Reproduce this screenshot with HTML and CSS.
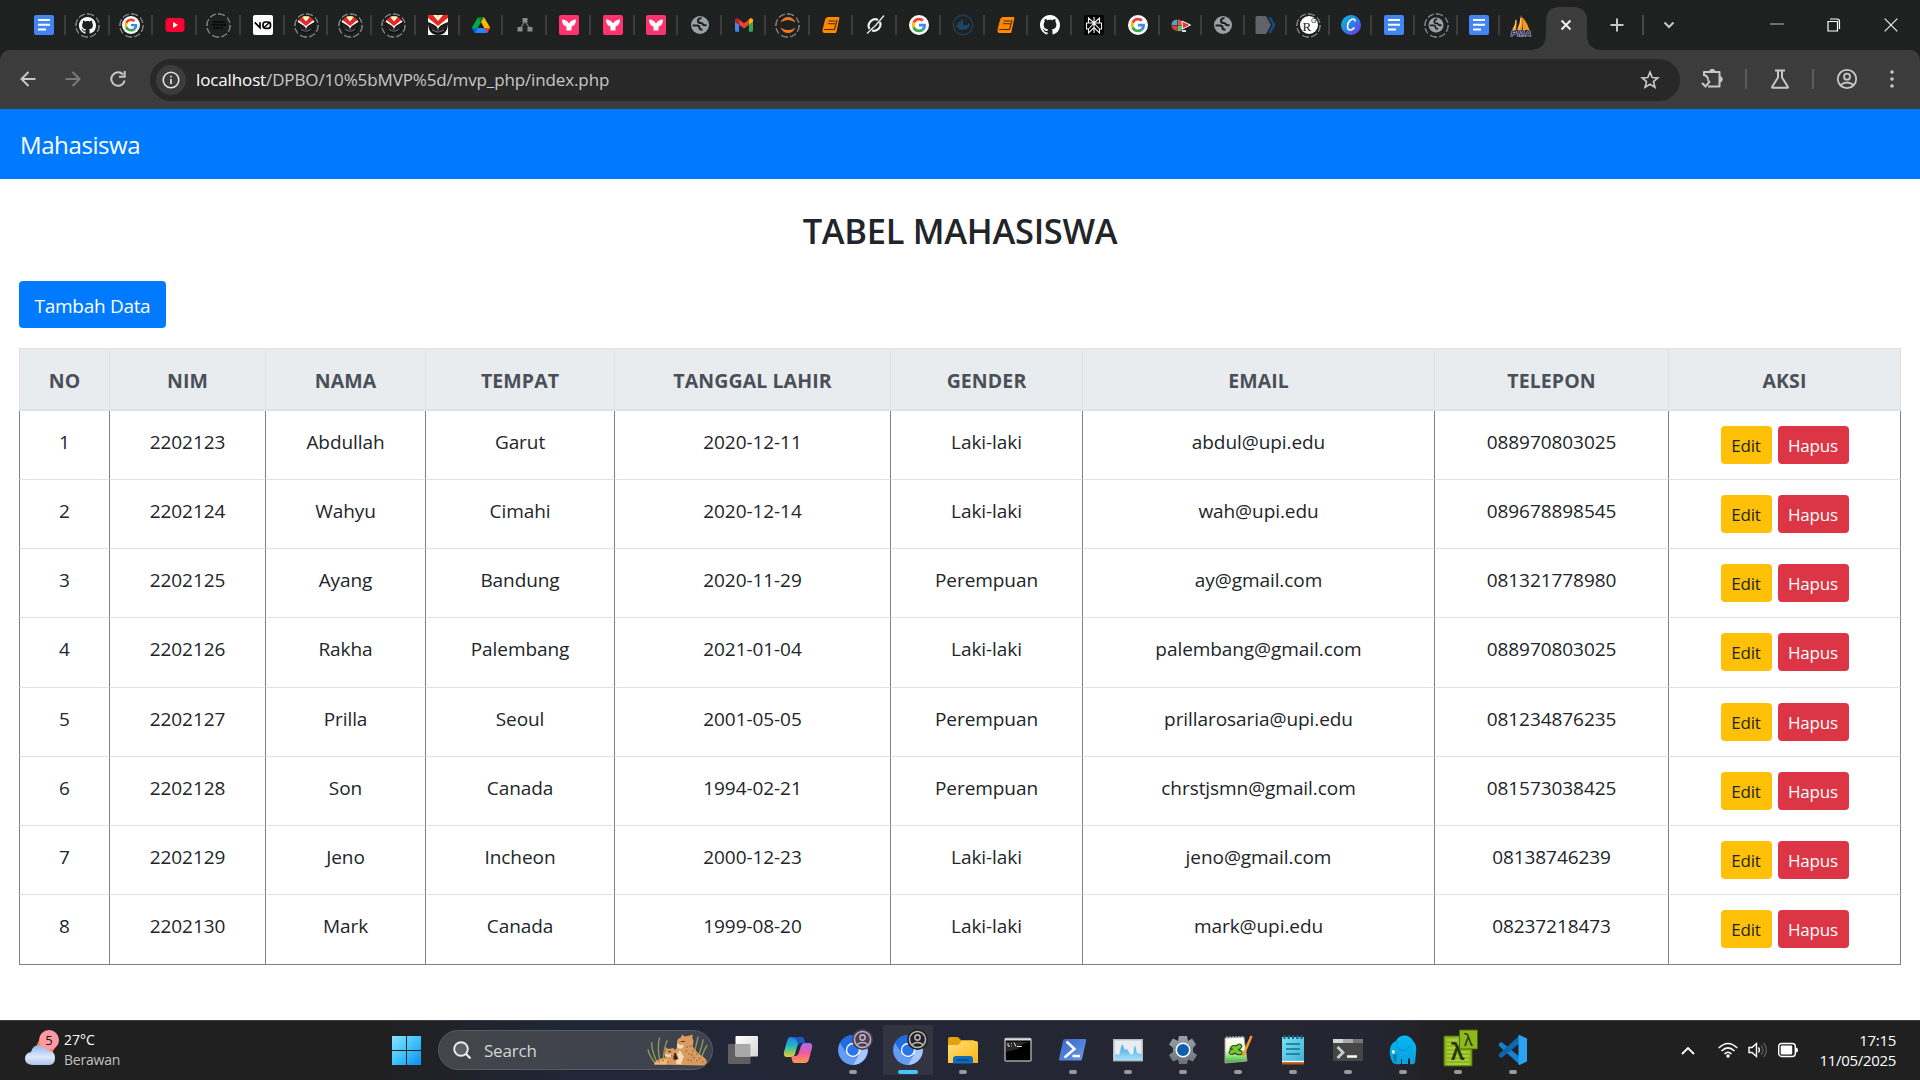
FILE: index.html
```html
<!DOCTYPE html>
<html lang="id">
<head>
<meta charset="utf-8">
<title>Mahasiswa</title>
<link rel="stylesheet" href="styles.css">
</head>
<body>
<svg class="defs" aria-hidden="true">
  <defs>
    <linearGradient id="gwin" x1="0" y1="0" x2="1" y2="1"><stop offset="0" stop-color="#8be2ff"/><stop offset=".5" stop-color="#3fc3fb"/><stop offset="1" stop-color="#0a8df5"/></linearGradient>
    <linearGradient id="gcanva" x1="0" y1="0" x2="1" y2="1"><stop offset="0" stop-color="#00c4cc"/><stop offset=".5" stop-color="#2b7fe8"/><stop offset="1" stop-color="#7d2ae8"/></linearGradient>
    <linearGradient id="gcloud" x1="0" y1="0" x2="0" y2="1"><stop offset="0" stop-color="#8fb4f0"/><stop offset=".6" stop-color="#dfe9fb"/><stop offset="1" stop-color="#a9c4f0"/></linearGradient>
    <linearGradient id="gfold" x1="0" y1="0" x2="1" y2="1"><stop offset="0" stop-color="#ffe07a"/><stop offset="1" stop-color="#f9b613"/></linearGradient>
    <linearGradient id="gcop1" x1="0" y1="0" x2="0" y2="1"><stop offset="0" stop-color="#1f7fe8"/><stop offset=".5" stop-color="#28c0b8"/><stop offset="1" stop-color="#f2c92c"/></linearGradient>
    <linearGradient id="gcop2" x1="0" y1="0" x2="0" y2="1"><stop offset="0" stop-color="#a66cf0"/><stop offset=".5" stop-color="#ee5aa0"/><stop offset="1" stop-color="#ff9a4c"/></linearGradient>
    <linearGradient id="gps" x1="0" y1="0" x2="1" y2="1"><stop offset="0" stop-color="#3564c8"/><stop offset="1" stop-color="#6c9bea"/></linearGradient>
    <linearGradient id="gtv" x1="0" y1="0" x2="1" y2="1"><stop offset="0" stop-color="#ffffff"/><stop offset="1" stop-color="#d5d5d5"/></linearGradient>
    <linearGradient id="gele" x1="0" y1="0" x2="0" y2="1"><stop offset="0" stop-color="#04b9f1"/><stop offset="1" stop-color="#0aa0e0"/></linearGradient>
    <linearGradient id="gnote" x1="0" y1="0" x2="1" y2="1"><stop offset="0" stop-color="#7ee0f5"/><stop offset="1" stop-color="#3fb2d6"/></linearGradient>
    <linearGradient id="ggrass" x1="0" y1="0" x2="0" y2="1"><stop offset="0" stop-color="#ffffff"/><stop offset=".5" stop-color="#f0ffd8"/><stop offset="1" stop-color="#35b52a"/></linearGradient>
    <linearGradient id="ggear" x1="0" y1="0" x2="0" y2="1"><stop offset="0" stop-color="#9aa1a8"/><stop offset="1" stop-color="#6a7179"/></linearGradient>
    <linearGradient id="gmon" x1="0" y1="0" x2="0" y2="1"><stop offset="0" stop-color="#3ba4dc"/><stop offset="1" stop-color="#a6e0fb"/></linearGradient>
  </defs>
  <symbol id="docs" viewBox="0 0 24 24"><rect x="2" y="2" width="20" height="20" rx="2" fill="#4285f4"/><path d="M6 7h12M6 11.8h12M6 16.6h8" stroke="#fff" stroke-width="2"/></symbol>
  <symbol id="github" viewBox="0 0 16 16"><path fill="#fff" d="M8 0C3.58 0 0 3.58 0 8c0 3.54 2.29 6.53 5.47 7.59.4.07.55-.17.55-.38 0-.19-.01-.82-.01-1.49-2.01.37-2.53-.49-2.69-.94-.09-.23-.48-.94-.82-1.13-.28-.15-.68-.52-.01-.53.63-.01 1.08.58 1.23.82.72 1.21 1.87.87 2.33.66.07-.52.28-.87.51-1.07-1.78-.2-3.64-.89-3.64-3.95 0-.87.31-1.59.82-2.15-.08-.2-.36-1.02.08-2.12 0 0 .67-.21 2.2.82.64-.18 1.32-.27 2-.27s1.36.09 2 .27c1.53-1.04 2.2-.82 2.2-.82.44 1.1.16 1.92.08 2.12.51.56.82 1.27.82 2.15 0 3.07-1.87 3.75-3.65 3.95.29.25.54.73.54 1.48 0 1.07-.01 1.93-.01 2.2 0 .21.15.46.55.38A8.01 8.01 0 0 0 16 8c0-4.42-3.58-8-8-8"/></symbol>
  <symbol id="google" viewBox="-9 -9 66 66"><circle cx="24" cy="24" r="33" fill="#fff"/><path fill="#EA4335" d="M24 9.5c3.54 0 6.71 1.22 9.21 3.6l6.85-6.85C35.9 2.38 30.47 0 24 0 14.62 0 6.51 5.38 2.56 13.22l7.98 6.19C12.43 13.72 17.74 9.5 24 9.5z"/><path fill="#4285F4" d="M46.98 24.55c0-1.57-.15-3.09-.38-4.55H24v9.02h12.94c-.58 2.96-2.26 5.48-4.78 7.18l7.73 6c4.51-4.18 7.09-10.36 7.09-17.65z"/><path fill="#FBBC05" d="M10.53 28.59A14.5 14.5 0 0 1 9.77 24c0-1.6.27-3.14.76-4.59l-7.98-6.19A23.9 23.9 0 0 0 0 24c0 3.88.92 7.54 2.56 10.78l7.97-6.19z"/><path fill="#34A853" d="M24 48c6.48 0 11.93-2.13 15.89-5.81l-7.73-6c-2.15 1.45-4.92 2.3-8.16 2.3-6.26 0-11.57-4.22-13.47-9.91l-7.98 6.19C6.51 42.62 14.62 48 24 48z"/></symbol>
  <symbol id="youtube" viewBox="0 0 24 24"><rect x="2.5" y="5" width="19" height="14" rx="3.5" fill="#f03"/><path d="M10 9l5 3-5 3z" fill="#fff"/></symbol>
  <symbol id="lines" viewBox="0 0 24 24"><path d="M6 9h12M5 12h14M6 15h10" stroke="#080808" stroke-width="1.5"/></symbol>
  <symbol id="vzero" viewBox="0 0 24 24"><rect x="2" y="2" width="20" height="20" rx="2" fill="#fff"/><path d="M3.700 9.300l5.300 5.400V9.300" fill="none" stroke="#000" stroke-width="1.700"/><rect x="12" y="9" width="7.500" height="6.300" rx="2.500" fill="none" stroke="#000" stroke-width="1.700"/><path d="M13 14.500l5.500-5" stroke="#000" stroke-width="1.500"/></symbol>
  <symbol id="crest" viewBox="0 0 20 20"><path d="M0 7Q0 20 10 20T20 7L10 11z" fill="#111"/><path d="M0 0h20v3L10 12 0 3z" fill="#e8281e"/><path d="M5 0l5 6 5-6z" fill="#fff"/><path d="M8 0l2 3 2-3z" fill="#ffe02a"/><path d="M0 3l10 8 10-8v3l-8 5-2 3-2-3-8-5z" fill="#fff"/><path d="M4 4l6 6 6-6-4 1-2 2-2-2z" fill="#e8281e"/><path d="M1 8l7 4 2 5 2-5 7-4-1 5-5 4H7l-5-4z" fill="#222"/><path d="M4 15l5 2M16 15l-5 2M10 12v6" stroke="#999" stroke-width=".7"/></symbol>
  <symbol id="drive" viewBox="0 0 87.300 78"><path fill="#0066da" d="m6.600 66.850 3.850 6.650c.8 1.400 1.950 2.500 3.300 3.300L27.500 53H0c0 1.550.4 3.100 1.200 4.500z"/><path fill="#00ac47" d="M43.650 25 29.900 1.200c-1.350.8-2.500 1.900-3.300 3.300L1.200 48.500A9 9 0 0 0 0 53h27.500z"/><path fill="#ea4335" d="M73.550 76.800c1.350-.8 2.500-1.900 3.300-3.300l9.250-16c.8-1.400 1.200-2.950 1.200-4.500H59.800l5.850 11.500z"/><path fill="#00832d" d="M43.650 25 57.400 1.200C56.050.4 54.500 0 52.900 0H34.400c-1.600 0-3.150.45-4.500 1.200z"/><path fill="#2684fc" d="M59.800 53H27.500L13.750 76.800c1.350.8 2.900 1.200 4.500 1.200h50.800c1.600 0 3.150-.45 4.500-1.200z"/><path fill="#ffba00" d="m73.400 26.500-12.700-22c-.8-1.400-1.950-2.500-3.300-3.300L43.650 25 59.800 53h27.450c0-1.550-.4-3.100-1.200-4.500z"/></symbol>
  <symbol id="tree" viewBox="0 0 24 24"><path d="M12 8L7 16M12 8l5 8" stroke="#7c7c7c" stroke-width="1.300"/><path d="M9.500 5h5v4.500h-5zM4.500 14h5v4.500h-5zM14.500 14h5v4.500h-5z" fill="#8a8a8a"/></symbol>
  <symbol id="ypink" viewBox="0 0 24 24"><rect x="2" y="2" width="20" height="20" rx="2" fill="#ff3370"/><path d="M5 6.500c3 0 5 1 7 4 2-3 4-4 7-4-.2 4.500-2 6.500-4.500 7v4h-5v-4C7 13 5.200 11 5 6.500z" fill="#fff"/></symbol>
  <symbol id="globe" viewBox="0 0 24 24"><circle cx="12" cy="12" r="9" fill="#9aa0a6"/><path d="M13.500 5q-3.500.5-3.500 2.800T13 10q1.500.3 2 1.500t3.500.5M4.500 12.500h5q2 .3 2 2.300t3 1.700" fill="none" stroke="#1f2120" stroke-width="2.200"/></symbol>
  <symbol id="gmail" viewBox="52 42 88 66"><path fill="#4285f4" d="M58 108h14V74L52 59v43c0 3.320 2.690 6 6 6"/><path fill="#34a853" d="M120 108h14c3.320 0 6-2.690 6-6V59l-20 15"/><path fill="#fbbc04" d="M120 48v26l20-15v-8c0-7.420-8.470-11.650-14.400-7.200"/><path fill="#ea4335" d="M72 74V48l24 18 24-18v26L96 92"/><path fill="#c5221f" d="M52 51v8l20 15V48l-5.600-4.200C60.460 39.350 52 43.580 52 51"/></symbol>
  <symbol id="jupyter" viewBox="0 0 24 24"><path d="M4.500 9.500Q7 4 12 4t7.500 5.500Q16 7 12 7T4.500 9.500zM4.500 14.500Q7 20 12 20t7.500-5.500Q16 17 12 17t-7.500-2.500z" fill="#f37726"/></symbol>
  <symbol id="book" viewBox="0 0 24 24"><path d="M8.500 4.500H20L16.800 19.500H5q-1.500-.3-1-2.500L6.500 7q.5-2.300 2-2.500z" fill="#ff8a00" stroke="#ff8a00" stroke-linejoin="round"/><path d="M9.500 8h7M9 10.700h7M5 16.500h10.500L18 7" stroke="#4a2800" fill="none" stroke-width="1.100"/></symbol>
  <symbol id="slash" viewBox="0 0 24 24"><path d="M15 7a6.500 6.500 0 0 0-8.500 9M17 9a6.500 6.500 0 0 1-8 8.500" stroke="#eee" stroke-width="2.200" fill="none"/><path d="M21 2.500L13 12 4 20.500" stroke="#eee" stroke-width="1.300"/></symbol>
  <symbol id="docker" viewBox="0 0 24 24"><circle cx="12" cy="12" r="9.700" fill="none" stroke="#1c3f5c" stroke-width="1.400"/><path d="M5 12h11l2-2 1 2c-1 4-4 5-7 5s-6-1-7-5zM7 9h5v3H7zM10 6.500h2V9h-2z" fill="#1c4566"/></symbol>
  <symbol id="burst" viewBox="0 0 24 24"><rect x="2" y="2" width="20" height="20" rx="2" fill="#000"/><path d="M12 4v16M6.500 5l5.500 5 5.500-5v5h2v6h-2v4L12 14.500 6.500 20v-4h-2v-6h2zM6.500 10H12l-5.500 6M17.500 10H12l5.500 6" stroke="#f4f4f4" fill="none" stroke-width="1.100"/></symbol>
  <symbol id="mosaic" viewBox="0 0 24 24"><path d="M2.500 11Q3 7 8 6.500V12H2.500z" fill="#4fa3c7"/><path d="M8.500 6.500Q12 6 13 9v3H8.500z" fill="#e8563a"/><path d="M2.500 12.500H8V18q-5-1-5.500-5.500z" fill="#d8402a"/><path d="M8.500 12.500h5V17q-2 2-5 1z" fill="#75ad7c"/><path d="M13 8l8.500 4-8 4z" fill="#e33" stroke="#fff"/><path d="M13 17h4v2h-4z" fill="#ddd"/></symbol>
  <symbol id="arrow" viewBox="0 0 24 24"><path d="M3 3h9l5 9-5 9H3a1.500 1.500 0 0 1-1.500-1.500v-15A1.500 1.500 0 0 1 3 3z" fill="#606367"/><path d="M15.500 4l4.500 8-4.500 8" fill="none" stroke="#0d4e94" stroke-width="2.400"/></symbol>
  <symbol id="canva" viewBox="0 0 24 24"><circle cx="12" cy="12" r="10" fill="url(#gcanva)"/><path d="M16 8.500c.5-2-1.500-3-3.500-2-3 1.500-4.500 5.500-3.800 8.500.8 3 4.300 2.500 6.800-.5" fill="none" stroke="#fff" stroke-width="1.700"/></symbol>
  <symbol id="chrome" viewBox="0 0 30 30"><circle cx="15" cy="15" r="15" fill="#2d78ea"/><path d="M2 8A15 15 0 0 0 15 30l6-10.500A7 7 0 0 1 9 19z" fill="#639bf5"/><path d="M15 30A15 15 0 0 0 29 10H15l6 9.500z" fill="#a8c8fb"/><path d="M2 7.500A15 15 0 0 1 28.500 9H15q-5 0-6.500 8z" fill="#1f6be0"/><circle cx="15" cy="15" r="7.200" fill="#fff"/><circle cx="15" cy="15" r="5.800" fill="#2775e8"/></symbol>
  <symbol id="person" viewBox="0 0 24 24"><circle cx="12" cy="12" r="9.200" fill="none" stroke="currentColor" stroke-width="1.800"/><circle cx="12" cy="9.700" r="3" fill="none" stroke="currentColor" stroke-width="1.800"/><path d="M5.500 18q6.500-5 13 0" fill="none" stroke="currentColor" stroke-width="1.800"/></symbol>
</svg>

<header class="browser">
  <div class="tabstrip">
    <div class="tabs">
      <span class="tab"><svg class="ic24"><use href="#docs"/></svg></span>
      <span class="tab ringed"><svg class="ic17"><use href="#github"/></svg></span>
      <span class="tab ringed"><svg class="ic18"><use href="#google"/></svg></span>
      <span class="tab"><svg class="ic24"><use href="#youtube"/></svg></span>
      <span class="tab ringed"><svg class="ic24"><use href="#lines"/></svg></span>
      <span class="tab"><svg class="ic24"><use href="#vzero"/></svg></span>
      <span class="tab ringed"><svg class="ic18 round"><use href="#crest"/></svg></span>
      <span class="tab ringed"><svg class="ic18 round"><use href="#crest"/></svg></span>
      <span class="tab ringed"><svg class="ic18 round"><use href="#crest"/></svg></span>
      <span class="tab"><svg class="ic20 white"><use href="#crest"/></svg></span>
      <span class="tab"><svg class="ic18"><use href="#drive"/></svg></span>
      <span class="tab"><svg class="ic24"><use href="#tree"/></svg></span>
      <span class="tab"><svg class="ic24"><use href="#ypink"/></svg></span>
      <span class="tab"><svg class="ic24"><use href="#ypink"/></svg></span>
      <span class="tab"><svg class="ic24"><use href="#ypink"/></svg></span>
      <span class="tab"><svg class="ic24"><use href="#globe"/></svg></span>
      <span class="tab"><svg class="ic18"><use href="#gmail"/></svg></span>
      <span class="tab ringed"><svg class="ic24"><use href="#jupyter"/></svg></span>
      <span class="tab"><svg class="ic24"><use href="#book"/></svg></span>
      <span class="tab"><svg class="ic24"><use href="#slash"/></svg></span>
      <span class="tab"><svg class="ic20"><use href="#google"/></svg></span>
      <span class="tab"><svg class="ic24"><use href="#docker"/></svg></span>
      <span class="tab"><svg class="ic24"><use href="#book"/></svg></span>
      <span class="tab"><svg class="ic20"><use href="#github"/></svg></span>
      <span class="tab"><svg class="ic24"><use href="#burst"/></svg></span>
      <span class="tab"><svg class="ic20"><use href="#google"/></svg></span>
      <span class="tab slim"><svg class="ic24"><use href="#mosaic"/></svg></span>
      <span class="tab slim"><svg class="ic24"><use href="#globe"/></svg></span>
      <span class="tab slim"><svg class="ic24"><use href="#arrow"/></svg></span>
      <span class="tab slim ringed"><svg class="ic24" viewBox="0 0 24 24"><circle cx="12" cy="12" r="9" fill="#fff"/><text x="5.500" y="18" font-family="Liberation Serif" font-size="13" fill="#222">R</text><text x="14" y="10" font-family="Liberation Sans" font-size="7" fill="#222">G</text></svg></span>
      <span class="tab slim"><svg class="ic24"><use href="#canva"/></svg></span>
      <span class="tab slim"><svg class="ic24"><use href="#docs"/></svg></span>
      <span class="tab slim ringed"><svg class="ic20"><use href="#globe"/></svg></span>
      <span class="tab slim"><svg class="ic24"><use href="#docs"/></svg></span>
      <span class="tab slim last"><svg class="ic24" viewBox="0 0 24 24"><path d="M3 17q3-5 4-11 1 5 0 11zM8 17q3-7 4-15 2 6 1 15zM14 17l-1-13q6 6 7.500 13z" fill="#f6981f"/><path d="M5 16q2-3 2-9M10 16q2-5 2-11" stroke="#f8cf9a" fill="none"/><text x="2" y="22.500" font-family="Liberation Sans" font-weight="bold" font-style="italic" font-size="8" textLength="20" fill="#25264f" stroke="#bfc0dc" stroke-width="1.200" paint-order="stroke">PMA</text></svg></span>
    </div>
    <svg class="active-tab" viewBox="0 0 72 43"><path d="M0 43q16 0 16-16V14q0-14 14-14h13q14 0 14 14v13q0 16 15 16z" fill="#3c3c3c"/><path d="M31.500 13.500l9 9M40.500 13.500l-9 9" stroke="#eee" stroke-width="2"/></svg>
    <svg class="newtab" viewBox="0 0 14 14"><path d="M7 .5v13M.5 7h13" stroke="#c7c7c7" stroke-width="2"/></svg>
    <span class="sep"></span>
    <svg class="tabmenu" viewBox="0 0 12 8"><path d="M1.500 1.500L6 6l4.500-4.500" fill="none" stroke="#c7c7c7" stroke-width="2"/></svg>
    <div class="winctl">
      <svg class="ic14" viewBox="0 0 14 14"><path d="M0 6h14" stroke="#999" stroke-width="1.300"/></svg>
      <svg class="ic14" viewBox="0 0 14 14"><path d="M1 3.500h9.500V13H1zM3 1h7q2.500 0 2.500 2.500V11" fill="none" stroke="#fff" stroke-width="1.200"/></svg>
      <svg class="ic14" viewBox="0 0 14 14"><path d="M.7.700l12.600 12.600M13.300.700L.7 13.300" stroke="#eee" stroke-width="1.200"/></svg>
    </div>
  </div>
  <div class="toolbar">
    <div class="nav">
      <svg class="ic16" viewBox="0 0 16 16"><path d="M15.500 8H2M8.500 1L1.500 8l7 7" fill="none" stroke="#c7c7c7" stroke-width="2"/></svg>
      <svg class="ic16" viewBox="0 0 16 16"><path d="M.5 8H14M7.500 1l7 7-7 7" fill="none" stroke="#7a7a7a" stroke-width="2"/></svg>
      <svg class="ic16" viewBox="0 0 16 16"><path d="M13 3.500A6.700 6.700 0 1 0 14.600 9.500M14.700 0v5.700H9" fill="none" stroke="#c7c7c7" stroke-width="2"/></svg>
    </div>
    <div class="omnibox">
      <span class="info"><svg class="ic18" viewBox="0 0 18 18"><circle cx="9" cy="9" r="7.800" fill="none" stroke="#e3e3e3" stroke-width="1.600"/><path d="M9 8v5M9 4.800v1.700" stroke="#e3e3e3" stroke-width="1.700"/></svg></span>
      <span class="url"><span class="host">localhost</span>/DPBO/10%5bMVP%5d/mvp_php/index.php</span>
      <svg class="ic20" viewBox="0 0 20 20"><path d="M10 2.200l2.200 5.300 5.600.4-4.300 3.700 1.400 5.600-4.900-3-4.900 3 1.400-5.600L2.200 7.900l5.600-.4z" fill="none" stroke="#c7c7c7" stroke-width="1.700"/></svg>
    </div>
    <div class="tools">
      <svg class="ext" viewBox="0 0 22 22"><path d="M2.500 8V4H18v14.500H6.500" fill="none" stroke="#c7c7c7" stroke-width="2" stroke-linejoin="round"/><path d="M2.500 7q4.500 1 4 6" fill="none" stroke="#c7c7c7" stroke-width="1.800"/><path d="M.5 15l3.500 3.500L8.500 13" fill="none" stroke="#c7c7c7" stroke-width="2"/><path d="M8 4a2.700 2.700 0 0 1 5.400 0zM18 8.500a2.800 2.800 0 0 1 0 5.600z" fill="#c7c7c7" stroke="#c7c7c7"/></svg>
      <span class="sep"></span>
      <svg class="ic20" viewBox="0 0 20 20"><path d="M5 1.500h10M8 2v6.500L2 18q0 .7.500.7h15q.5 0 .5-.7l-6-9.500V2" fill="none" stroke="#c7c7c7" stroke-width="2"/></svg>
      <span class="sep"></span>
      <svg class="ic24 prof"><use href="#person"/></svg>
      <svg class="dots" viewBox="0 0 4 18"><g fill="#c7c7c7"><circle cx="2" cy="2" r="1.800"/><circle cx="2" cy="9" r="1.800"/><circle cx="2" cy="16" r="1.800"/></g></svg>
    </div>
  </div>
</header>

<nav class="navbar"><a class="brand">Mahasiswa</a></nav>

<main class="page">
  <h2 class="title">TABEL MAHASISWA</h2>
  <a class="btn btn-primary">Tambah Data</a>
  <table class="table">
    <colgroup><col class="c1"><col class="c2"><col class="c3"><col class="c4"><col class="c5"><col class="c6"><col class="c7"><col class="c8"><col class="c9"></colgroup>
    <thead>
      <tr><th>NO</th><th>NIM</th><th>NAMA</th><th>TEMPAT</th><th>TANGGAL LAHIR</th><th>GENDER</th><th>EMAIL</th><th>TELEPON</th><th>AKSI</th></tr>
    </thead>
    <tbody>
      <tr><td>1</td><td>2202123</td><td>Abdullah</td><td>Garut</td><td>2020-12-11</td><td>Laki-laki</td><td>abdul@upi.edu</td><td>088970803025</td><td class="actions"><a class="btn btn-edit">Edit</a><a class="btn btn-hapus">Hapus</a></td></tr>
      <tr><td>2</td><td>2202124</td><td>Wahyu</td><td>Cimahi</td><td>2020-12-14</td><td>Laki-laki</td><td>wah@upi.edu</td><td>089678898545</td><td class="actions"><a class="btn btn-edit">Edit</a><a class="btn btn-hapus">Hapus</a></td></tr>
      <tr><td>3</td><td>2202125</td><td>Ayang</td><td>Bandung</td><td>2020-11-29</td><td>Perempuan</td><td>ay@gmail.com</td><td>081321778980</td><td class="actions"><a class="btn btn-edit">Edit</a><a class="btn btn-hapus">Hapus</a></td></tr>
      <tr class="tall"><td>4</td><td>2202126</td><td>Rakha</td><td>Palembang</td><td>2021-01-04</td><td>Laki-laki</td><td>palembang@gmail.com</td><td>088970803025</td><td class="actions"><a class="btn btn-edit">Edit</a><a class="btn btn-hapus">Hapus</a></td></tr>
      <tr><td>5</td><td>2202127</td><td>Prilla</td><td>Seoul</td><td>2001-05-05</td><td>Perempuan</td><td>prillarosaria@upi.edu</td><td>081234876235</td><td class="actions"><a class="btn btn-edit">Edit</a><a class="btn btn-hapus">Hapus</a></td></tr>
      <tr><td>6</td><td>2202128</td><td>Son</td><td>Canada</td><td>1994-02-21</td><td>Perempuan</td><td>chrstjsmn@gmail.com</td><td>081573038425</td><td class="actions"><a class="btn btn-edit">Edit</a><a class="btn btn-hapus">Hapus</a></td></tr>
      <tr><td>7</td><td>2202129</td><td>Jeno</td><td>Incheon</td><td>2000-12-23</td><td>Laki-laki</td><td>jeno@gmail.com</td><td>08138746239</td><td class="actions"><a class="btn btn-edit">Edit</a><a class="btn btn-hapus">Hapus</a></td></tr>
      <tr class="tall"><td>8</td><td>2202130</td><td>Mark</td><td>Canada</td><td>1999-08-20</td><td>Laki-laki</td><td>mark@upi.edu</td><td>08237218473</td><td class="actions"><a class="btn btn-edit">Edit</a><a class="btn btn-hapus">Hapus</a></td></tr>
    </tbody>
  </table>
</main>

<footer class="taskbar">
  <div class="weather">
    <svg class="cloud" viewBox="0 0 36 38"><circle cx="21" cy="16" r="9" fill="#f77f1e"/><path d="M7 35q-7-1-7-6.500T6 22q2-7 8-7t9 5q7 1 7 8t-6 7z" fill="url(#gcloud)"/><circle cx="24" cy="10" r="10" fill="#ff99a4"/><text x="24" y="15" text-anchor="middle" font-family="Open Sans" font-size="13" fill="#111">5</text></svg>
    <div class="wtext"><span class="temp">27°C</span><span class="cond">Berawan</span></div>
  </div>
  <svg class="start" viewBox="0 0 29 29"><path d="M0 0h14v14H0zM15 0h14v14H15zM0 15h14v14H0zM15 15h14v14H15z" fill="url(#gwin)"/></svg>
  <div class="search">
    <svg class="ic18" viewBox="0 0 18 18"><circle cx="8" cy="8" r="6.800" fill="#5b5f68" stroke="#eee" stroke-width="1.900"/><path d="M12.800 12.800L17.500 17.500" stroke="#eee" stroke-width="2.200"/></svg>
    <span class="placeholder">Search</span>
    <svg class="cheetah" viewBox="0 0 64 32"><path d="M10 30Q3 22 2 15M12 30Q5 15 6 8M15 30Q11 14 14 3M18 28Q18 14 22 6M50 20Q52 8 54 2M54 22Q58 12 59 5M57 24Q60 16 63 11" fill="none" stroke="#8d9c58" stroke-width="1.400"/><path d="M8 31q2-6 12-7-2-4 0-7l0-4 3 2 5-1 2 2q3-3 2-8 0-4 4-5l1-3 3 2 5-1 3-1 0 4q2 3 0 8 3 5 8 9 7 4 7 8l-3 3z" fill="#d99b5f"/><path d="M31 30q0-10 4-14l4 7-3 8z" fill="#f4d9b2"/><path d="M9 29q8-4 14-3l-2 5H9z" fill="#efb878"/><path d="M32 9q3 3 7 1l-1 4q-4 2-6-1zM20 19q2 3 6 1v3q-3 1-6-1z" fill="#f6dcb8"/><path d="M36 7.500l4-.5M23 17.500l3 .5M30 19q-2 4-1 7l4-1z" stroke="#4d2d1c" fill="#33231d"/><path d="M42 13l1 0M45 12l1 0M48 17l1 0M44 20l1 0M52 20l1 0M49 24l1 0M55 25l1 0M43 26l1 0M17 27l1 0M22 28l1 0M26 22l1 0M47 21l1 0M46 27l1 0M52 27l1 0M58 28l1 0M13 28l1 0M41 17l1 0" stroke="#70401f" stroke-width="1.300"/></svg>
  </div>
  <div class="apps">
    <span class="app"><svg class="ic30" viewBox="0 0 30 30"><rect x="0" y="9" width="22.500" height="20" rx="1" fill="#606060"/><rect x="7.500" y="1" width="22.500" height="20.500" rx="1" fill="url(#gtv)"/><path d="M7.500 9h15v12.500h-15z" fill="#a9a9a9"/></svg></span>
    <span class="app"><svg class="ic30" viewBox="0 0 30 30"><path d="M8 2h10q2.500 0 3 3l1 3h-4q-3 0-4 4l-2 7q-1 3-4 3H4q-4 0-3-5L4 6q1-4 4-4z" fill="url(#gcop1)"/><path d="M22 28H12q-2.500 0-3-3l-1-4h4q3 0 4-4l2-6q1-3 4-3h4q4 0 3 5l-3 11q-1 4-4 4z" fill="url(#gcop2)"/><path d="M8 2h10q2.500 0 3 3l1 3h-4q-2 0-3 2l-1-4q-1-3-6-4z" fill="#1558c8"/></svg></span>
    <span class="app run"><svg class="ic30"><use href="#chrome"/></svg><svg class="badge violet"><use href="#person"/></svg></span>
    <span class="app run active"><svg class="ic30"><use href="#chrome"/></svg><svg class="badge"><use href="#person"/></svg></span>
    <span class="app run"><svg class="ic30" viewBox="0 0 30 30"><path d="M0 4q0-2 2-2h8l3 3h13v8H0z" fill="#e5a00d"/><path d="M0 10h10l4-4h14q2 0 2 2v20H0z" fill="url(#gfold)"/><path d="M5 28.500V24q0-3 3-3h14q3 0 3 3v4.500z" fill="#0f6cbd"/><path d="M9 25h12" stroke="#083f73" stroke-width="1.200"/></svg></span>
    <span class="app"><svg class="ic30" viewBox="0 0 30 30"><rect x="2" y="3.500" width="26" height="22.500" rx="1" fill="#000" stroke="#a5a5a5" stroke-width="1.500"/><path d="M2 3.500h26v2H2z" fill="#d8d8d8"/><path d="M3 7h24q-10 2-12 7L3 17z" fill="#282828"/><path d="M5 8v3h2M8.500 8v.8M8.500 10.500v.8M11 7.500l2 4M14 11.500h5" stroke="#ddd" fill="none" stroke-width="1"/></svg></span>
    <span class="app run"><svg class="ic30" viewBox="0 0 30 30"><path d="M7 4h20q1.500 0 1.200 1.500L24 24q-.5 1.500-2 1.500H2Q.5 25.500 1 24L5 5.500Q5.500 4 7 4z" fill="url(#gps)"/><path d="M8.500 6.500L16.500 14 6.500 22.500M14.500 21h7.500" fill="none" stroke="#fff" stroke-width="2.500"/></svg></span>
    <span class="app run"><svg class="ic30" viewBox="0 0 30 30"><rect x=".7" y="4.700" width="28.600" height="21" fill="#e8edf3" stroke="#b4bac2" stroke-width="1.400"/><path d="M2 19l4 1 3-11 3 6 2-1 4 6 2-1 2-9 2 8 5 1v6H2z" fill="url(#gmon)"/></svg></span>
    <span class="app run"><svg class="ic30" viewBox="0 0 30 30"><path d="M11 1h8l1 5 4-2.500 4 6L25 13v4l4 3-4 6.500-5-2-1 4.500h-8l-1-4.500-5 2L1 20l4-3v-4L1 9.500l4-6L10 6z" fill="url(#ggear)"/><circle cx="15" cy="15" r="7.500" fill="#fff"/><circle cx="15" cy="15" r="6" fill="#0f5fae"/></svg></span>
    <span class="app run"><svg class="ic30" viewBox="0 0 30 30"><path d="M2 3l19-1 3 24-22 2z" fill="url(#ggrass)" stroke="#9e9e9e"/><path d="M4 3v-2M7 3V1M10 3V1M13 3V1M16 3V1M19 3V1" stroke="#ccc"/><path d="M7 14q2-5 6-3 4-4 6 0-1 3-4 4 5 0 4 4-4 2-7-1-4 3-6 0 0-3 4-4z" fill="#78c92f" stroke="#294b18" stroke-width="1.100"/><path d="M28.500 1L20 21" stroke="#ee9d2a" stroke-width="2.500"/></svg></span>
    <span class="app run"><svg class="ic30" viewBox="0 0 30 30"><path d="M4 25h22v4.500H4z" fill="#b65a17"/><path d="M4 2h22v24H4z" fill="url(#gnote)"/><path d="M4 26.500h22" stroke="#fff" stroke-width="1.300"/><path d="M6.500 0v4M10.700 0v4M15 0v4M19.300 0v4M23.500 0v4" stroke="#11667d" stroke-width="2"/><path d="M8 9h14M8 14h14M8 19h14" stroke="#11738e" stroke-width="1.700"/></svg></span>
    <span class="app run"><svg class="ic30" viewBox="0 0 30 30"><rect y="4" width="30" height="22" rx="1.500" fill="#464646"/><path d="M0 4h10v4H0z" fill="#d6d6d6"/><path d="M10 4h10v4H10z" fill="#aaa"/><path d="M20 4h10v4H20z" fill="#777"/><path d="M4.500 12l5.500 5.500L4.500 23" fill="none" stroke="#ccc" stroke-width="2.800"/><path d="M14 21.500h10" stroke="#fff" stroke-width="2.500"/></svg></span>
    <span class="app run"><svg class="ic30" viewBox="0 0 30 30"><path d="M8 6q2-5 8-5.500t9 5.500q4 3 3 12l-1 10q-2 2-5 1v-6l-2 1v5h-6v-5h-1v5q-5 1-8-1-4-7-3-14 1-6 6-8z" fill="url(#gele)"/><path d="M4 15l3 1-1 3-2-1z" fill="#fff"/><path d="M10 6q-4 7 3 9 7 2 9-5" fill="none" stroke="#078cc4"/><path d="M5 20q0 5 3 8l1-9z" fill="#057fb3"/></svg></span>
    <span class="app run"><svg class="lambda" viewBox="0 0 36 38"><path d="M1 7h28v30H1z" fill="#8db91b" stroke="#4c6510"/><path d="M4 11h11M4 15h22M4 19h22M4 23h22M4 27h22M4 31h22M4 35h22" stroke="#bfe06a" stroke-width="1.200"/><text x="8" y="31" font-family="Noto Sans" font-weight="600" font-size="24" fill="#27330a">λ</text><path d="M16.500 1h18v19h-18z" fill="#8db91b" stroke="#4c6510"/><text x="21" y="17" font-family="Noto Sans" font-size="17" fill="#27330a">λ</text></svg></span>
    <span class="app run"><svg class="ic30" viewBox="0 0 30 30"><path d="M1 8.500l2.500-1.500L22 22v8L1 11z" fill="#1283cf"/><path d="M1 21.500L3.500 23 22 8V0L1 19z" fill="#0b66ac"/><path d="M21.500 0L29 3.500v23L21.500 30q-1 0-1-1V1q0-1 1-1z" fill="#2ba3f2"/></svg></span>
  </div>
  <div class="tray">
    <svg class="chev" viewBox="0 0 14 9"><path d="M1 8l6-6 6 6" fill="none" stroke="#fff" stroke-width="1.800"/></svg>
    <svg class="ic20 wifi" viewBox="0 0 20 16"><path d="M.7 6q9.300-9 18.600 0M3.500 9q6.500-6.300 13 0M6.500 12q3.500-3.500 7 0" fill="none" stroke="#fff" stroke-width="1.500"/><circle cx="10" cy="14" r="1.700" fill="#fff"/></svg>
    <svg class="ic20 vol" viewBox="0 0 20 16"><path d="M1 5.500h3L8.500 1.500v13L4 10.500H1z" fill="none" stroke="#fff" stroke-width="1.400"/><path d="M10.500 5.500q2 2.500 0 5" fill="none" stroke="#fff" stroke-width="1.300"/><path d="M13 3.500q4 4.500 0 9M15.500 1q6 7 0 14" fill="none" stroke="#5c5c5c" stroke-width="1.300"/></svg>
    <svg class="ic20" viewBox="0 0 20 16"><rect x=".7" y="1.500" width="16.600" height="13" rx="3" fill="none" stroke="#fff" stroke-width="1.400"/><rect x="2.700" y="3.500" width="11.500" height="9" rx="1.200" fill="#fff"/><path d="M18 5.500q2 0 2 2.500t-2 2.500z" fill="#fff"/></svg>
    <div class="clock"><span class="time">17:15</span><span class="date">11/05/2025</span></div>
  </div>
</footer>
</body>
</html>
```
FILE: styles.css
```css
* { box-sizing: border-box; }
body {
  margin: 0;
  width: 1920px;
  height: 1080px;
  overflow: hidden;
  display: flex;
  flex-direction: column;
  background: #fff;
  color: #212529;
  font-family: "Open Sans", "Noto Sans", sans-serif;
}
svg { display: block; flex: none; }
.defs { width: 0; height: 0; position: absolute; }
.ic14 { width: 14px; height: 14px; }
.ic16 { width: 16px; height: 16px; }
.ic17 { width: 17px; height: 17px; }
.ic18 { width: 18px; height: 18px; }
.ic20 { width: 20px; height: 20px; }
.ic24 { width: 24px; height: 24px; }
.ic30 { width: 30px; height: 30px; }
.round { border-radius: 50%; }
.white { background: #fff; }

/* Browser chrome */
.browser { height: 109px; background: #1f2120; flex: none; }
.tabstrip { height: 50px; display: flex; align-items: center; padding-left: 22px; }
.tabs { display: flex; }
.tab {
  width: 43.76px;
  height: 50px;
  display: flex;
  align-items: center;
  justify-content: center;
  background: linear-gradient(#3c3c3c, #3c3c3c) right center / 2px 20px no-repeat;
}
.tab.slim { width: 42.6px; }
.tab.last { background: none; width: 42px; }
.tab.ringed { position: relative; }
.tab.ringed::after {
  content: "";
  position: absolute;
  left: 50%;
  top: 50%;
  width: 25px;
  height: 25px;
  margin: -12.5px 0 0 -12.5px;
  border-radius: 50%;
  background: repeating-conic-gradient(#7b7c7c 0 32deg, transparent 34deg 45deg);
  mask: radial-gradient(closest-side, transparent 85%, #000 89%);
}
.active-tab { width: 72px; height: 43px; margin: 7px 0 0 -12px; }
.newtab { width: 14px; height: 14px; margin-left: 8px; }
.sep { width: 2px; height: 20px; background: #4a4a4a; flex: none; }
.tabstrip > .sep { margin-left: 18px; }
.tabmenu { width: 12px; height: 8px; margin-left: 19px; }
.winctl { display: flex; gap: 43px; margin-left: auto; padding-right: 22px; }
.toolbar {
  height: 59px;
  background: #3c3c3c;
  border-radius: 10px 10px 0 0;
  display: flex;
  align-items: center;
  padding: 0 26px 0 20px;
}
.nav { display: flex; gap: 29px; width: 130px; margin-top: -2px; }
.omnibox {
  width: 1530px;
  height: 42px;
  border-radius: 21px;
  background: #282828;
  display: flex;
  align-items: center;
  padding: 0 20px 0 6px;
  flex: none;
}
.info {
  width: 30px;
  height: 30px;
  border-radius: 50%;
  background: #3c3c3c;
  display: flex;
  align-items: center;
  justify-content: center;
}
.url { margin-left: 10px; flex: 1; font-size: 17px; letter-spacing: -.13px; color: #c7c7c7; white-space: nowrap; }
.host { color: #fff; }
.tools { display: flex; align-items: center; flex: 1; margin-left: 21px; margin-top: -2px; }
.ext { width: 23px; height: 22px; }
.tools .sep { height: 20px; background: #5c5c5c; margin: 0 23px 0 21px; }
.tools .ic20 + .sep { margin: 0 21px 0 22px; }
.prof { color: #c7c7c7; }
.dots { width: 4px; height: 18px; margin-left: auto; }

/* Page */
.navbar { height: 70px; background: #007bff; padding: 0 20px; display: flex; align-items: center; flex: none; }
.brand { color: #fff; font-size: 24px; letter-spacing: -.4px; }
.page { flex: 1; padding: 0 19px; min-height: 0; display: flex; flex-direction: column; align-items: flex-start; }
.title { margin: 28px 0 0; width: 100%; height: 48px; line-height: 48px; text-align: center; font-size: 34.5px; font-weight: 600; letter-spacing: -.3px; }
.btn { display: flex; align-items: center; justify-content: center; border-radius: 4px; white-space: nowrap; }
.btn-primary { width: 147px; height: 47px; margin-top: 26px; background: #007bff; color: #fff; font-size: 19px; letter-spacing: -.3px; padding-top: 2px; }
.table {
  margin-top: 20px;
  width: 1882px;
  table-layout: fixed;
  border-collapse: separate;
  border-spacing: 0;
  font-size: 19px;
  letter-spacing: -.07px;
  text-align: center;
}
.c1 { width: 90px; }
.c2 { width: 156px; }
.c3 { width: 160px; }
.c4 { width: 189px; }
.c5 { width: 276px; }
.c6 { width: 192px; }
.c7 { width: 352px; }
.c8 { width: 234px; }
.c9 { width: 233px; }
.table th {
  height: 63px;
  padding: 2px 0 0;
  color: #495057;
  background: #e9ecef;
  border: solid #dee2e6;
  border-width: 1px 0 2px 1px;
  font-weight: 700;
  font-size: 19.5px;
  letter-spacing: .1px;
}
.table td {
  height: 69px;
  padding: 16px 0 0;
  line-height: 30px;
  vertical-align: top;
  border-left: 1px solid #808080;
  border-bottom: 1px solid #dee2e6;
}
.tall td { height: 70px; }
.table th:last-child { border-right-width: 1px; }
.table td:last-child { border-right: 1px solid #808080; }
.table tr:last-child td { border-bottom-color: #808080; }
.table td.actions { padding-top: 15px; font-size: 0; }
.actions .btn { display: inline-flex; height: 38px; font-size: 17px; letter-spacing: -.2px; padding-top: 2px; vertical-align: top; }
.btn-edit { width: 51px; background: #ffc107; color: #212529; margin-right: 6px; }
.btn-hapus { width: 71px; background: #dc3545; color: #fff; }

/* Taskbar */
.taskbar {
  height: 60px;
  flex: none;
  border-top: 1px solid #3b4042;
  padding-bottom: 1px;
  background: linear-gradient(90deg, #202020 380px, #212738 580px, #232635 860px, #252632 1200px, #252531 1380px, #202020 1450px);
  display: flex;
  align-items: center;
  color: #fff;
  font-size: 14px;
}
.weather { width: 392px; display: flex; padding-left: 25px; }
.cloud { width: 36px; height: 38px; margin-top: -1px; }
.wtext { display: flex; flex-direction: column; line-height: 20px; margin-left: 3px; margin-top: -1px; }
.temp { letter-spacing: 0; }
.cond { color: #c2c2c2; letter-spacing: -.2px; }
.start { width: 29px; height: 29px; }
.search {
  width: 275px;
  height: 40px;
  margin-left: 17px;
  border: 1px solid #555b66;
  border-radius: 20px;
  background: linear-gradient(90deg, #424549, #3e424e);
  display: flex;
  align-items: center;
  padding: 0 4px 0 14px;
}
.placeholder { flex: 1; margin-left: 13px; font-size: 17px; letter-spacing: -.2px; color: #d4d5d8; }
.cheetah { width: 62px; height: 32px; }
.apps { display: flex; margin-left: 2px; }
.app { width: 55px; height: 50px; display: flex; align-items: center; justify-content: center; position: relative; }
.active { background: linear-gradient(#32343f, #32343f) center / 50px 50px no-repeat; }
.run::after { content: ""; position: absolute; left: 23.5px; bottom: 1px; width: 8px; height: 4px; border-radius: 2px; background: #98989d; }
.active::after { left: 17.5px; width: 20px; background: #4cc2ff; }
.badge { position: absolute; right: 7px; top: 4px; width: 21px; height: 21px; border-radius: 50%; background: #222; color: #b5b5b5; }
.violet { background: #4b4050; color: #bfadc6; }
.lambda { width: 36px; height: 38px; margin: -4px 0 0 6px; }
.tray { margin-left: auto; padding-right: 24px; display: flex; align-items: center; }
.chev { width: 14px; height: 9px; margin-right: 23px; }
.wifi { margin-right: 10px; }
.vol { margin-right: 10px; }
.clock { width: 98px; display: flex; flex-direction: column; align-items: flex-end; line-height: 20px; margin-top: -1px; font-size: 15px; letter-spacing: -.3px; }
```
